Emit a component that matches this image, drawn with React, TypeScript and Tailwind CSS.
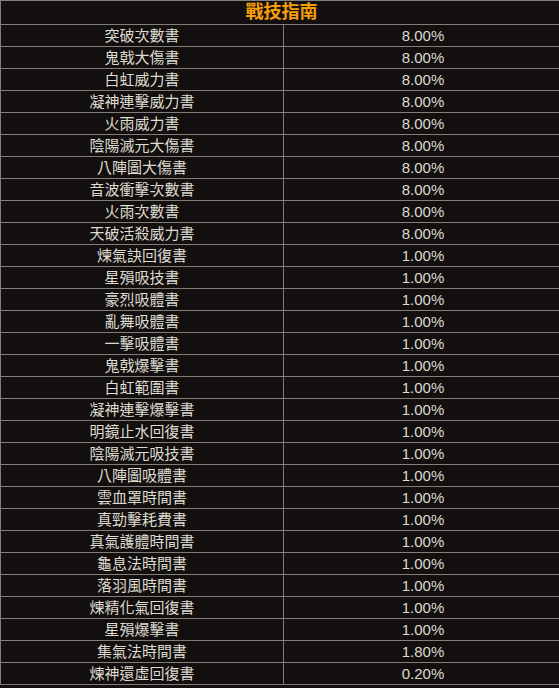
const rows: [string, string][] = [
  ['突破次數書', '8.00%'],
  ['鬼戟大傷書', '8.00%'],
  ['白虹威力書', '8.00%'],
  ['凝神連擊威力書', '8.00%'],
  ['火雨威力書', '8.00%'],
  ['陰陽滅元大傷書', '8.00%'],
  ['八陣圖大傷書', '8.00%'],
  ['音波衝擊次數書', '8.00%'],
  ['火雨次數書', '8.00%'],
  ['天破活殺威力書', '8.00%'],
  ['煉氣訣回復書', '1.00%'],
  ['星殞吸技書', '1.00%'],
  ['豪烈吸體書', '1.00%'],
  ['亂舞吸體書', '1.00%'],
  ['一擊吸體書', '1.00%'],
  ['鬼戟爆擊書', '1.00%'],
  ['白虹範圍書', '1.00%'],
  ['凝神連擊爆擊書', '1.00%'],
  ['明鏡止水回復書', '1.00%'],
  ['陰陽滅元吸技書', '1.00%'],
  ['八陣圖吸體書', '1.00%'],
  ['雲血罩時間書', '1.00%'],
  ['真勁擊耗費書', '1.00%'],
  ['真氣護體時間書', '1.00%'],
  ['龜息法時間書', '1.00%'],
  ['落羽風時間書', '1.00%'],
  ['煉精化氣回復書', '1.00%'],
  ['星殞爆擊書', '1.00%'],
  ['集氣法時間書', '1.80%'],
  ['煉神還虛回復書', '0.20%'],
];

export default function App() {
  return (
    <div className="w-[559px] h-[688px] overflow-hidden bg-[#140f0f]">
      <div className="w-[563px] border-t border-l border-r border-[#7e7e7a] text-[#dcdcd0] text-[15px] font-['Liberation_Sans','Noto_Sans_CJK_TC',sans-serif]">
        {/* header */}
        <div className="h-[24px] flex items-center justify-center border-b border-[#7e7e7a] text-[#f59e0b] text-[18px] font-bold">
          戰技指南
        </div>
        {rows.map(([name, rate]) => (
          <div key={name} className="h-[22px] flex border-b border-[#7e7e7a]">
            <div className="w-[283px] shrink-0 border-r border-[#7e7e7a] flex items-center justify-center leading-none">
              {name}
            </div>
            <div className="flex-1 flex items-center justify-center leading-none">{rate}</div>
          </div>
        ))}
      </div>
    </div>
  );
}
